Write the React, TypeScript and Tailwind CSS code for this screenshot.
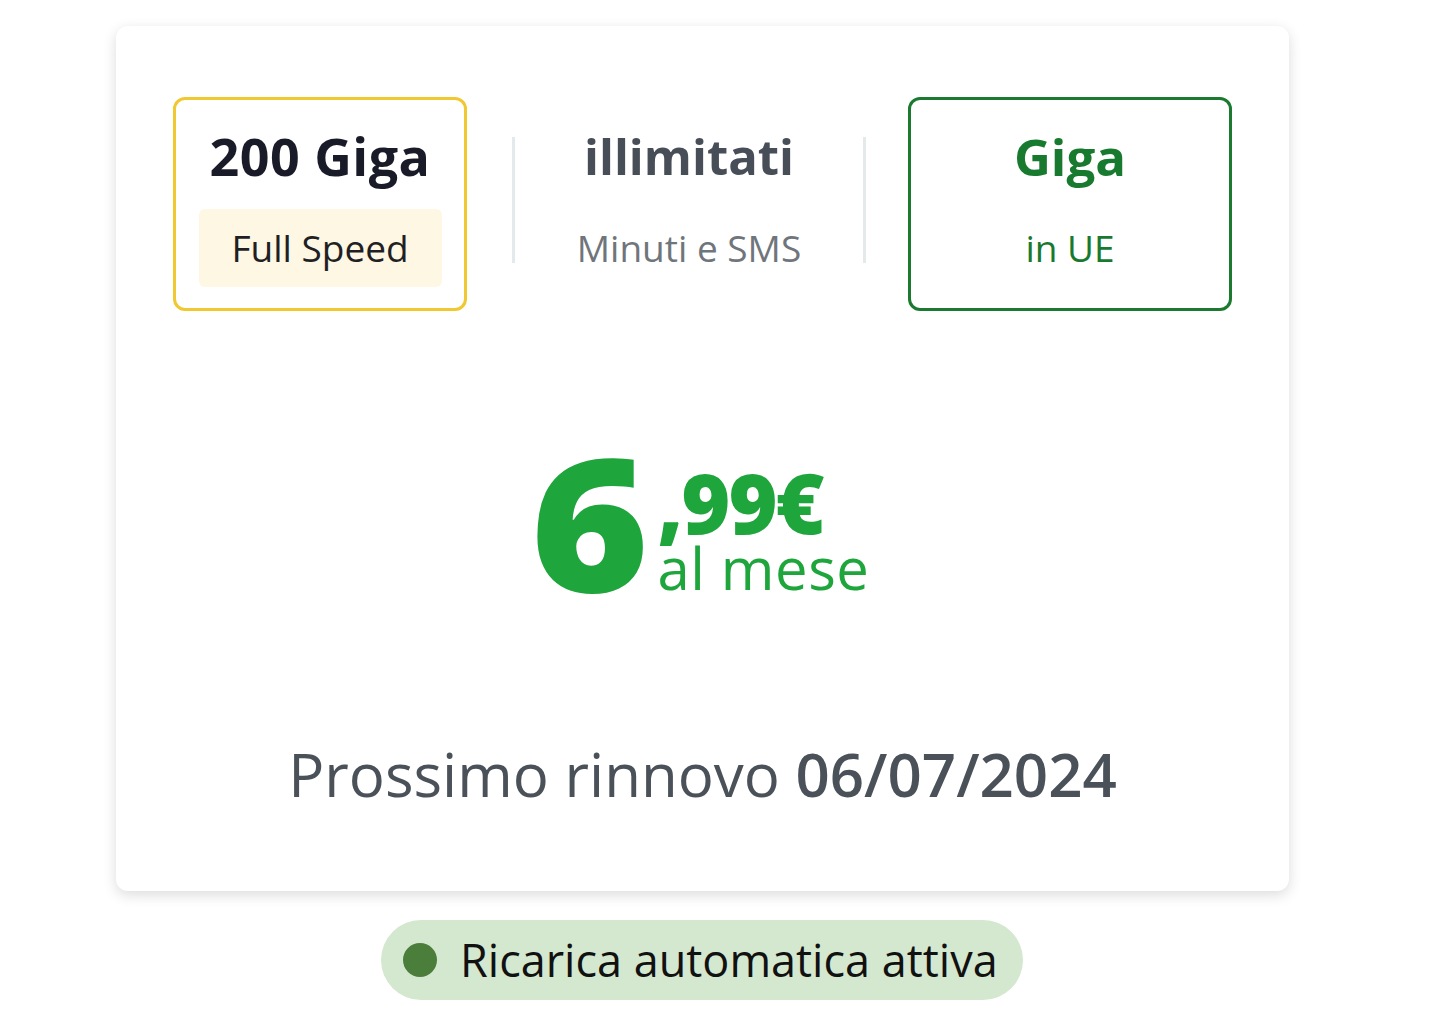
import React from 'react';

// Offer summary card
const font = { fontFamily: '"Open Sans", "Noto Sans", sans-serif' };

const App: React.FC = () => {
  return (
    <div className="min-h-screen bg-white pt-[26px]" style={font}>
      <div className="ml-[116px] w-[1173px] rounded-xl bg-white shadow-[0_4px_14px_rgba(0,0,0,0.14)] px-[57px] pt-[71px] pb-[77px]">
        {/* Feature boxes */}
        <div className="flex items-start">
          <div className="w-[294px] h-[214px] rounded-xl border-[3px] border-[#f0c832] flex flex-col items-center pt-[26px]">
            <div className="h-[60px] leading-[60px] text-[52px] font-bold text-[#1a1b28] tracking-[0.5px]">200 Giga</div>
            <div className="mt-[23px] w-[243px] h-[78px] rounded-md bg-[#fdf7e3] flex items-center justify-center text-[37px] text-[#1f1f24]">
              Full Speed
            </div>
          </div>
          <div className="ml-[45px] mt-[40px] w-[3px] h-[126px] bg-[#e4e9ec]" />
          <div className="flex-1 h-[214px] flex flex-col items-center pt-[29px]">
            <div className="h-[60px] leading-[60px] text-[49px] font-bold text-[#474e57]">illimitati</div>
            <div className="mt-[23px] h-[78px] flex items-center text-[37px] text-[#70757c]">Minuti e SMS</div>
          </div>
          <div className="mr-[42px] mt-[40px] w-[3px] h-[126px] bg-[#e4e9ec]" />
          <div className="w-[324px] h-[214px] rounded-xl border-[3px] border-[#1b7a30] flex flex-col items-center pt-[26px]">
            <div className="h-[60px] leading-[60px] text-[51px] font-bold text-[#177a2e]">Giga</div>
            <div className="mt-[23px] h-[78px] flex items-center text-[37px] text-[#177a2e]">in UE</div>
          </div>
        </div>

        {/* Price */}
        <div className="mt-[130px] flex justify-center text-[#1ea53b] pl-[-4px]">
          <div className="text-[184px] leading-[160px] font-extrabold scale-x-110">6</div>
          <div className="ml-[14px] flex flex-col">
            <div className="text-[84px] leading-[60px] font-extrabold tracking-tight mt-[31px]">,99€</div>
            <div className="text-[58px] leading-[58px] mt-[7px] tracking-[0.5px]">al mese</div>
          </div>
        </div>

        {/* Renewal */}
        <div className="mt-[133px] text-center text-[60px] leading-[80px] text-[#4a5159]">
          Prossimo rinnovo <span className="font-semibold">06/07/2024</span>
        </div>
      </div>

      {/* Auto top-up badge */}
      <div className="mt-[29px] ml-[381px] h-[80px] w-[642px] rounded-full bg-[#d4e7cf] flex items-center pl-[22px]">
        <span className="w-[34px] h-[34px] rounded-full bg-[#4b7d3b]" />
        <span className="ml-[23px] text-[45px] text-[#111]">Ricarica automatica attiva</span>
      </div>
    </div>
  );
};

export default App;
